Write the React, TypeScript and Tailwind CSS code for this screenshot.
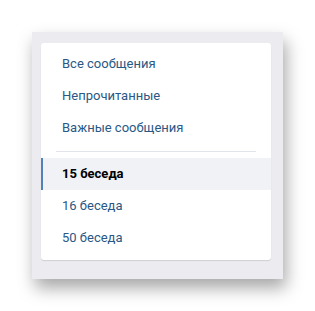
import React from 'react';

interface MenuItem {
  id: string;
  label: string;
  active?: boolean;
}

const filters: MenuItem[] = [
  { id: 'all', label: 'Все сообщения' },
  { id: 'unread', label: 'Непрочитанные' },
  { id: 'important', label: 'Важные сообщения' }
];

const chats: MenuItem[] = [
  { id: '15', label: '15 беседа', active: true },
  { id: '16', label: '16 беседа' },
  { id: '50', label: '50 беседа' }
];

const Row: React.FC<{ item: MenuItem }> = ({ item }) => (
  <div
    className={`flex h-8 items-center text-[13px] ${
      item.active
        ? 'border-l-2 border-[#5181b8] bg-[#f0f2f5] pl-[19px] font-bold text-black'
        : 'pl-[21px] text-[#2a5885]'
    }`}
  >
    {item.label}
  </div>
);

export default function App() {
  return (
    <div className="h-[311px] w-[315px] bg-white pl-8 pt-8" style={{ fontFamily: 'Roboto, "Noto Sans", sans-serif' }}>
      <div className="w-[251px] bg-[#ebebf0] pb-[19px] pl-[9px] pr-[12px] pt-[11px] shadow-[3px_9px_16px_rgba(0,0,0,0.35)]">
        {/* Карточка меню */}
        <div className="rounded-[3px] bg-white pb-[6px] pt-[5px] shadow-[0_1px_1px_rgba(0,0,0,0.12)]">
          {filters.map((item) => (
            <Row key={item.id} item={item} />
          ))}
          <div className="mx-[15px] mb-[6px] mt-[7px] h-px bg-[#e1e5eb]" />
          {chats.map((item) => (
            <Row key={item.id} item={item} />
          ))}
        </div>
      </div>
    </div>
  );
}
